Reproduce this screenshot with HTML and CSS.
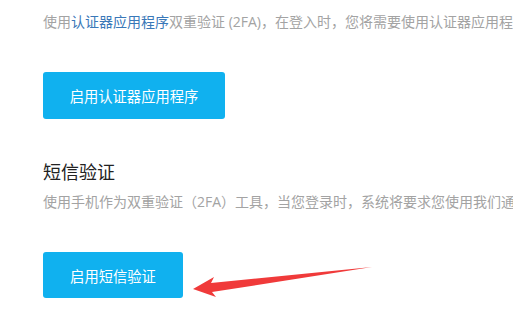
FILE: index.html
```html
<!DOCTYPE html>
<html lang="zh">
<head>
<meta charset="utf-8">
<link rel="stylesheet" href="styles.css">
</head>
<body>
<div class="page">
  <p class="desc">使用<a class="link" href="#">认证器应用程序</a>双重验证 (2FA)，在登入时，您将需要使用认证器应用程序</p>
  <button class="btn btn-app">启用认证器应用程序</button>
  <h3 class="title">短信验证</h3>
  <p class="desc">使用手机作为双重验证（2FA）工具，当您登录时，系统将要求您使用我们通过短信发送的验证码</p>
  <button class="btn btn-sms">启用短信验证</button>
</div>
<svg class="arrow" width="513" height="321" viewBox="0 0 513 321">
  <polygon points="193,289 214,277 211,283 372,267 212,292 216,297" fill="#f03a3a"/>
</svg>
</body>
</html>
```
FILE: styles.css
```css
html, body {
  margin: 0;
  padding: 0;
  background: #ffffff;
  overflow: hidden;
}
body {
  width: 513px;
  height: 321px;
  position: relative;
  font-family: "Open Sans", "Noto Sans CJK SC", sans-serif;
}
.page {
  padding: 11.5px 0 0 43px;
  white-space: nowrap;
  overflow: hidden;
}
.desc {
  margin: 0;
  font-size: 14px;
  line-height: 20px;
  color: #a3a3a3;
}
.link {
  color: #3a78b8;
  text-decoration: none;
}
.btn {
  display: flex;
  align-items: center;
  justify-content: center;
  border: none;
  border-radius: 3px;
  background: #10b1ef;
  color: #ffffff;
  font-family: inherit;
  font-size: 14.3px;
  padding: 0;
}
.btn-app {
  margin-top: 40.5px;
  width: 182px;
  height: 47px;
}
.btn-sms {
  margin-top: 40px;
  width: 140px;
  height: 46px;
}
.title {
  margin: 39.5px 0 7.5px;
  font-size: 18px;
  line-height: 26px;
  font-weight: normal;
  color: #222222;
}
.arrow {
  position: absolute;
  left: 0;
  top: 0;
}
```
